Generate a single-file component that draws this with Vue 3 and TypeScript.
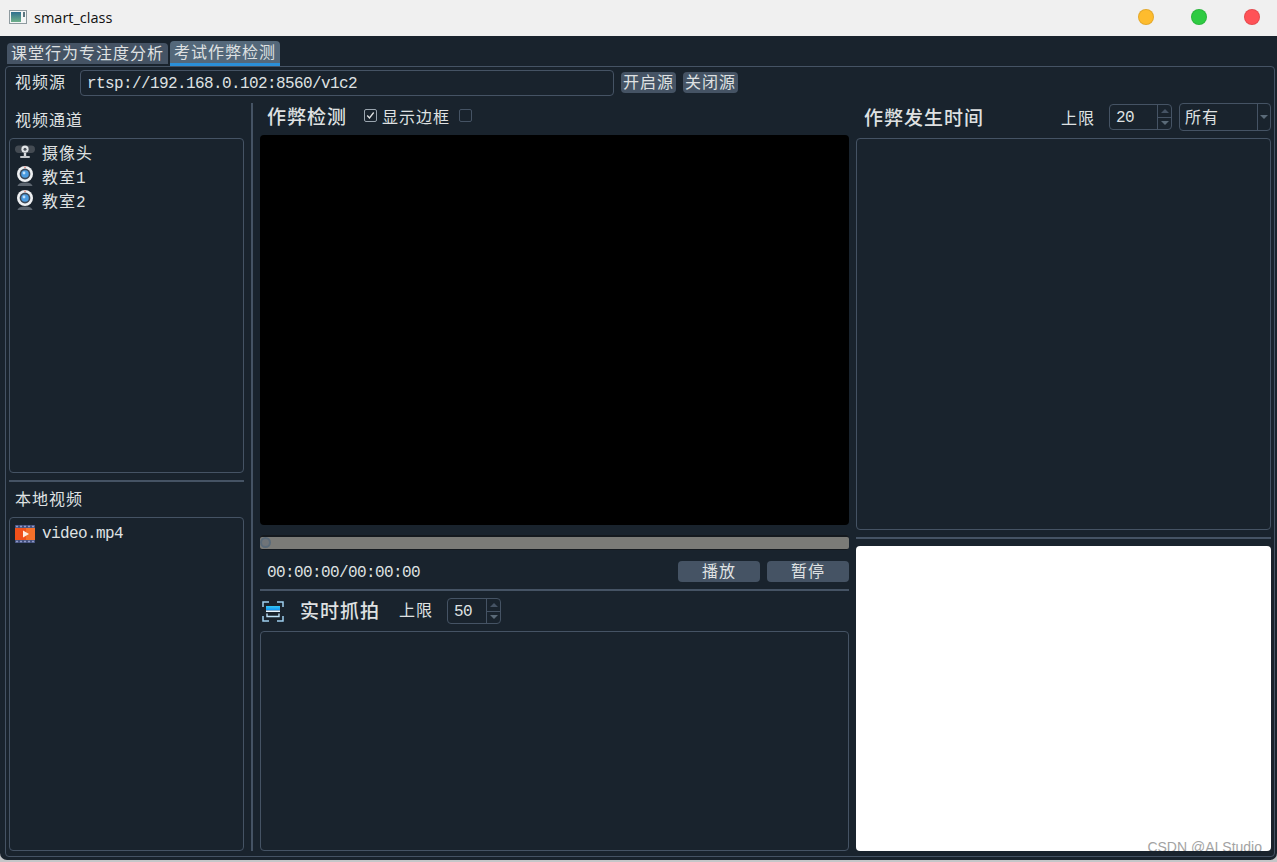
<template>
  <div class="window">
    <header class="titlebar">
      <svg class="app-icon" width="18" height="14" viewBox="0 0 18 14">
        <defs>
          <linearGradient id="app-fill" x1="0" y1="0" x2="0" y2="1">
            <stop offset="0" stop-color="#2f6f8f" />
            <stop offset="1" stop-color="#6fb08a" />
          </linearGradient>
        </defs>
        <rect x="0.5" y="0.5" width="17" height="13" fill="#f4f6f6" stroke="#8f9ba0" />
        <rect x="2" y="2" width="10" height="10" fill="url(#app-fill)" />
        <rect x="14" y="2" width="2" height="5" fill="#5c7680" />
      </svg>
      <span class="app-name">smart_class</span>
      <div class="lights">
        <span class="light yellow"></span>
        <span class="light green"></span>
        <span class="light red"></span>
      </div>
    </header>

    <nav class="tabs">
      <button v-for="(tab, i) in tabs" :key="tab" class="tab" :class="{ active: i === activeTab }" type="button">
        {{ tab }}
      </button>
    </nav>

    <main class="pane">
      <div class="source-row">
        <label class="source-label" for="source">视频源</label>
        <input id="source" class="source-input" type="text" value="rtsp://192.168.0.102:8560/v1c2" readonly />
        <button class="small-btn" type="button">开启源</button>
        <button class="small-btn" type="button">关闭源</button>
      </div>

      <div class="columns">
        <section class="col-left">
          <h3 class="side-title">视频通道</h3>
          <ul class="list channels">
            <li class="list-item">
              <svg class="item-icon" width="20" height="14" viewBox="0 0 20 14">
                <rect x="0" y="0.5" width="20" height="7.5" rx="3.7" fill="#444b53" />
                <circle cx="10" cy="4.2" r="3.6" fill="#e2e5e8" />
                <circle cx="10" cy="4.2" r="1.5" fill="#4a5058" />
                <rect x="8.8" y="8" width="2.4" height="3" fill="#d5d8db" />
                <rect x="5" y="11" width="10" height="2" rx="1" fill="#c2c6ca" />
              </svg>
              <span>摄像头</span>
            </li>
            <li v-for="room in rooms" :key="room" class="list-item">
              <svg class="item-icon" width="20" height="22" viewBox="0 0 20 22">
                <path d="M2.5 21c.8-4.6 14.2-4.6 15 0z" fill="#5d6670" />
                <circle cx="10" cy="9" r="8" fill="#eef0f2" />
                <circle cx="10" cy="9" r="5.4" fill="#3d4a5a" />
                <circle cx="10" cy="9" r="3.8" fill="#4a9be0" />
                <circle cx="9" cy="8" r="1.4" fill="#bfe0fa" />
                <circle cx="10" cy="2.2" r="0.8" fill="#e06a5c" />
              </svg>
              <span>教室<span class="mono">{{ room }}</span></span>
            </li>
          </ul>
          <div class="h-split left-split"></div>
          <h3 class="side-title">本地视频</h3>
          <ul class="list videos">
            <li class="list-item">
              <svg class="item-icon" width="20" height="18" viewBox="0 0 20 18">
                <rect width="20" height="18" fill="#46527e" />
                <rect y="3" width="20" height="12" fill="#f0501a" />
                <rect x="11" y="3" width="9" height="12" fill="#f4702a" />
                <path d="M8 5.5l6 3.5-6 3.5z" fill="#fdeee2" />
                <path d="M1 1.5h2M5 1.5h2M9 1.5h2M13 1.5h2M17 1.5h2M1 16.5h2M5 16.5h2M9 16.5h2M13 16.5h2M17 16.5h2" stroke="#8f9ac8" stroke-width="1.5" />
              </svg>
              <span class="mono">video.mp4</span>
            </li>
          </ul>
        </section>

        <div class="v-split"></div>

        <section class="col-mid">
          <div class="mid-head">
            <h2 class="big-title">作弊检测</h2>
            <label class="check">
              <span class="box checked">
                <svg width="9" height="9" viewBox="0 0 9 9"><path d="M1.2 4.5l2.3 2.5 4.2-5.5" fill="none" stroke="#dfe1e2" stroke-width="1.3" /></svg>
              </span>
              <span>显示边框</span>
            </label>
            <span class="box empty"></span>
          </div>
          <div class="video"></div>
          <div class="slider">
            <div class="groove"><span class="handle"></span></div>
          </div>
          <div class="controls">
            <span class="time">00:00:00/00:00:00</span>
            <button class="play-btn" type="button">播放</button>
            <button class="play-btn" type="button">暂停</button>
          </div>
          <div class="h-split"></div>
          <div class="snap-head">
            <svg class="snap-icon" width="22" height="21" viewBox="0 0 22 21">
              <defs>
                <linearGradient id="snap-fill" x1="0" y1="0" x2="0" y2="1">
                  <stop offset="0" stop-color="#35c8f5" />
                  <stop offset="1" stop-color="#0f8ff5" />
                </linearGradient>
              </defs>
              <path d="M1 6V1h6M15 1h6v5M21 15v5h-6M7 20H1v-5" fill="none" stroke="#9fd0ee" stroke-width="1.5" />
              <rect x="4" y="5" width="14" height="4.5" fill="url(#snap-fill)" />
              <rect x="4" y="9.5" width="14" height="1.5" fill="#eaf6ff" />
              <path d="M5 12.5v3h12v-3" fill="none" stroke="#bfe2f8" stroke-width="1.4" />
            </svg>
            <h2 class="big-title">实时抓拍</h2>
            <span class="limit-label">上限</span>
            <div class="spin">
              <span class="spin-value mono">50</span>
              <span class="spin-arrows"><i class="up"></i><i class="down"></i></span>
            </div>
          </div>
          <div class="list snaps"></div>
        </section>

        <div class="gap"></div>

        <section class="col-right">
          <div class="right-head">
            <h2 class="big-title">作弊发生时间</h2>
            <span class="limit-label push">上限</span>
            <div class="spin">
              <span class="spin-value mono">20</span>
              <span class="spin-arrows"><i class="up"></i><i class="down"></i></span>
            </div>
            <div class="combo">
              <span class="combo-value">所有</span>
              <span class="combo-drop"><i class="down"></i></span>
            </div>
          </div>
          <div class="list times"></div>
          <div class="h-split right-split"></div>
          <div class="preview">
            <span class="watermark">CSDN @AI Studio</span>
          </div>
        </section>
      </div>
    </main>
  </div>
</template>

<script setup lang="ts">
const tabs: string[] = ['课堂行为专注度分析', '考试作弊检测'];
const activeTab = 1;
const rooms: number[] = [1, 2];
</script>

<style>
html,
body {
  margin: 0;
  height: 862px;
  overflow: hidden;
  background: #c4c6c8;
}
</style>

<style scoped>
* {
  box-sizing: border-box;
}

.window {
  width: 1277px;
  height: 860px;
  display: flex;
  flex-direction: column;
  overflow: hidden;
  background: #19232d;
  border-radius: 0 0 7px 7px;
  color: #dfe1e2;
  font-family: "Noto Sans CJK SC", "Liberation Sans", sans-serif;
  font-size: 16px;
}

.titlebar {
  height: 36px;
  flex: none;
  display: flex;
  align-items: center;
  padding: 0 0 2px 9px;
  background: #f0f0f0;
  color: #111;
}

.app-icon {
  margin-right: 7px;
}

.app-name {
  font-family: "Open Sans", "Liberation Sans", sans-serif;
  font-size: 14.5px;
}

.lights {
  margin-left: auto;
  margin-right: 17px;
  display: flex;
  gap: 37px;
}

.light {
  width: 16px;
  height: 16px;
  border-radius: 50%;
  border: 1px solid rgba(0, 0, 0, 0.1);
}

.yellow {
  background: #febc2e;
}

.green {
  background: #2ecb42;
}

.red {
  background: #ff5257;
}

.tabs {
  height: 30px;
  flex: none;
  display: flex;
  align-items: flex-end;
  gap: 2px;
  padding-left: 7px;
}

.tab {
  height: 21px;
  margin-bottom: 2px;
  padding: 0 4px 3px;
  border: none;
  border-radius: 4px 4px 0 0;
  background: #455364;
  color: #dfe1e2;
  font: inherit;
  font-size: 16px;
  line-height: 18px;
  letter-spacing: 1px;
  white-space: nowrap;
}

.tab.active {
  height: 25px;
  margin-bottom: 0;
  padding: 0 4px 3px;
  background: #54687a;
  border-bottom: 3px solid #2a8fd8;
}

.pane {
  width: 1270px;
  height: 791px;
  margin-left: 5px;
  padding: 0 3px 5px;
  flex: none;
  display: flex;
  flex-direction: column;
  border: 1px solid #455364;
  border-radius: 4px;
}

.source-row {
  height: 36px;
  flex: none;
  display: flex;
  align-items: flex-start;
  padding: 3px 0 0 6px;
}

.source-label {
  width: 65px;
  flex: none;
  line-height: 23px;
  letter-spacing: 1px;
}

.source-input {
  width: 534px;
  height: 26px;
  margin-right: 7px;
  padding: 2px 6px 0;
  background: #19232d;
  border: 1px solid #455364;
  border-radius: 4px;
  color: #dfe1e2;
  font-family: "Liberation Mono", monospace;
  font-size: 16px;
  letter-spacing: -0.6px;
  outline: none;
}

.small-btn {
  width: 55px;
  height: 21px;
  margin: 2px 7px 0 0;
  padding: 0 0 3px;
  border: none;
  border-radius: 4px;
  background: #455364;
  color: #dfe1e2;
  font: inherit;
  line-height: 18px;
  letter-spacing: 1px;
  white-space: nowrap;
}

.columns {
  flex: 1;
  min-height: 0;
  display: grid;
  grid-template-columns: 235px 16px 589px 7px 415px;
}

.col-left,
.col-mid,
.col-right {
  display: flex;
  flex-direction: column;
  min-height: 0;
}

.side-title {
  height: 35px;
  flex: none;
  margin: 0;
  padding: 2px 0 0 6px;
  font-size: 16px;
  font-weight: 400;
  line-height: 28px;
  letter-spacing: 1px;
}

.list {
  margin: 0;
  padding: 0;
  list-style: none;
  border: 1px solid #455364;
  border-radius: 4px;
}

.channels {
  height: 335px;
  flex: none;
  padding-top: 1px;
}

.videos {
  flex: 1;
  padding-top: 4px;
}

.list-item {
  height: 24px;
  display: flex;
  align-items: center;
  padding-left: 5px;
  position: relative;
  letter-spacing: 1px;
}

.list-item > span {
  margin-left: 27px;
}

.item-icon {
  position: absolute;
  left: 5px;
  top: 50%;
  transform: translateY(-50%);
}

.mono {
  font-family: "Liberation Mono", monospace;
  font-size: 16px;
  letter-spacing: -0.6px;
}

.h-split {
  height: 2px;
  flex: none;
  background: #455364;
}

.left-split {
  margin-top: 7px;
}

.v-split {
  width: 2px;
  height: 100%;
  margin-left: 7px;
  background: #455364;
}

.mid-head {
  height: 32px;
  flex: none;
  display: flex;
  align-items: center;
  padding: 0 0 7px 7px;
}

.big-title {
  margin: 0;
  font-size: 19px;
  font-weight: 500;
  letter-spacing: 1px;
  white-space: nowrap;
  color: #dfe1e2;
}

.check {
  display: flex;
  align-items: center;
  gap: 5px;
  margin-left: 17px;
  letter-spacing: 1px;
}

.box {
  width: 13px;
  height: 13px;
  display: flex;
  align-items: center;
  justify-content: center;
  border: 1px solid #9aa5af;
  border-radius: 2px;
}

.box.empty {
  margin-left: 9px;
  border-color: #455364;
}

.video {
  height: 390px;
  flex: none;
  background: #000;
  border-radius: 4px;
}

.slider {
  height: 15px;
  flex: none;
  margin-top: 10px;
  padding: 2px 0;
  background: #14191e;
  border-radius: 4px;
}

.groove {
  height: 12px;
  position: relative;
  background: #7b7b77;
  border-radius: 2px;
}

.handle {
  position: absolute;
  left: 0;
  top: 0;
  width: 11px;
  height: 11px;
  border: 2px solid #5a6a78;
  border-radius: 50%;
  background: #6f7478;
}

.controls {
  height: 39px;
  flex: none;
  display: flex;
  align-items: center;
  justify-content: flex-end;
  gap: 7px;
  padding-top: 3px;
}

.time {
  margin-right: auto;
  padding: 4px 0 0 7px;
  font-family: "Liberation Mono", monospace;
  font-size: 16px;
  letter-spacing: -0.6px;
}

.play-btn {
  width: 82px;
  height: 21px;
  padding: 0 0 2px;
  border: none;
  border-radius: 4px;
  background: #455364;
  color: #dfe1e2;
  font: inherit;
  line-height: 19px;
  letter-spacing: 1px;
}

.snap-head {
  height: 40px;
  flex: none;
  display: flex;
  align-items: center;
  padding: 0 0 0 2px;
}

.snap-head .big-title,
.snap-head .limit-label {
  position: relative;
  top: -2px;
}

.snap-icon {
  margin-right: 16px;
}

.limit-label {
  margin-left: 19px;
  margin-right: 14px;
  letter-spacing: 1px;
  white-space: nowrap;
}

.spin {
  width: 54px;
  height: 26px;
  display: flex;
  border: 1px solid #455364;
  border-radius: 4px;
}

.spin-value {
  flex: 1;
  padding: 2px 0 0 6px;
  line-height: 23px;
}

.spin-arrows {
  width: 14px;
  display: flex;
  flex-direction: column;
  border-left: 1px solid #455364;
}

.spin-arrows i {
  flex: 1;
  display: flex;
  align-items: center;
  justify-content: center;
}

.spin-arrows .up {
  border-bottom: 1px solid #455364;
}

.up::before,
.down::before {
  content: "";
  width: 0;
  height: 0;
  border-left: 4px solid transparent;
  border-right: 4px solid transparent;
}

.up::before {
  border-bottom: 4px solid #455364;
}

.down::before {
  border-top: 4px solid #5a6a78;
}

.snaps {
  flex: 1;
}

.right-head {
  height: 35px;
  flex: none;
  display: flex;
  align-items: center;
  padding: 0 0 7px 8px;
}

.right-head .big-title {
  position: relative;
  top: -1px;
}

.push {
  margin-left: auto;
}

.right-head .spin {
  width: 63px;
}

.combo {
  width: 92px;
  height: 28px;
  margin-left: 7px;
  display: flex;
  border: 1px solid #455364;
  border-radius: 4px;
}

.combo-value {
  flex: 1;
  padding-left: 5px;
  line-height: 25px;
  letter-spacing: 1px;
}

.combo-drop {
  width: 13px;
  display: flex;
  align-items: center;
  justify-content: center;
  border-left: 1px solid #455364;
}

.combo-drop i {
  display: flex;
}

.times {
  height: 392px;
  flex: none;
}

.right-split {
  margin-top: 7px;
}

.preview {
  flex: 1;
  margin-top: 7px;
  position: relative;
  overflow: hidden;
  background: #fff;
  border-radius: 4px;
}

.watermark {
  position: absolute;
  right: 9px;
  bottom: -4px;
  color: #a3a3a3;
  font-family: "Liberation Sans", sans-serif;
  font-size: 14px;
  line-height: 16px;
  white-space: nowrap;
}
</style>
